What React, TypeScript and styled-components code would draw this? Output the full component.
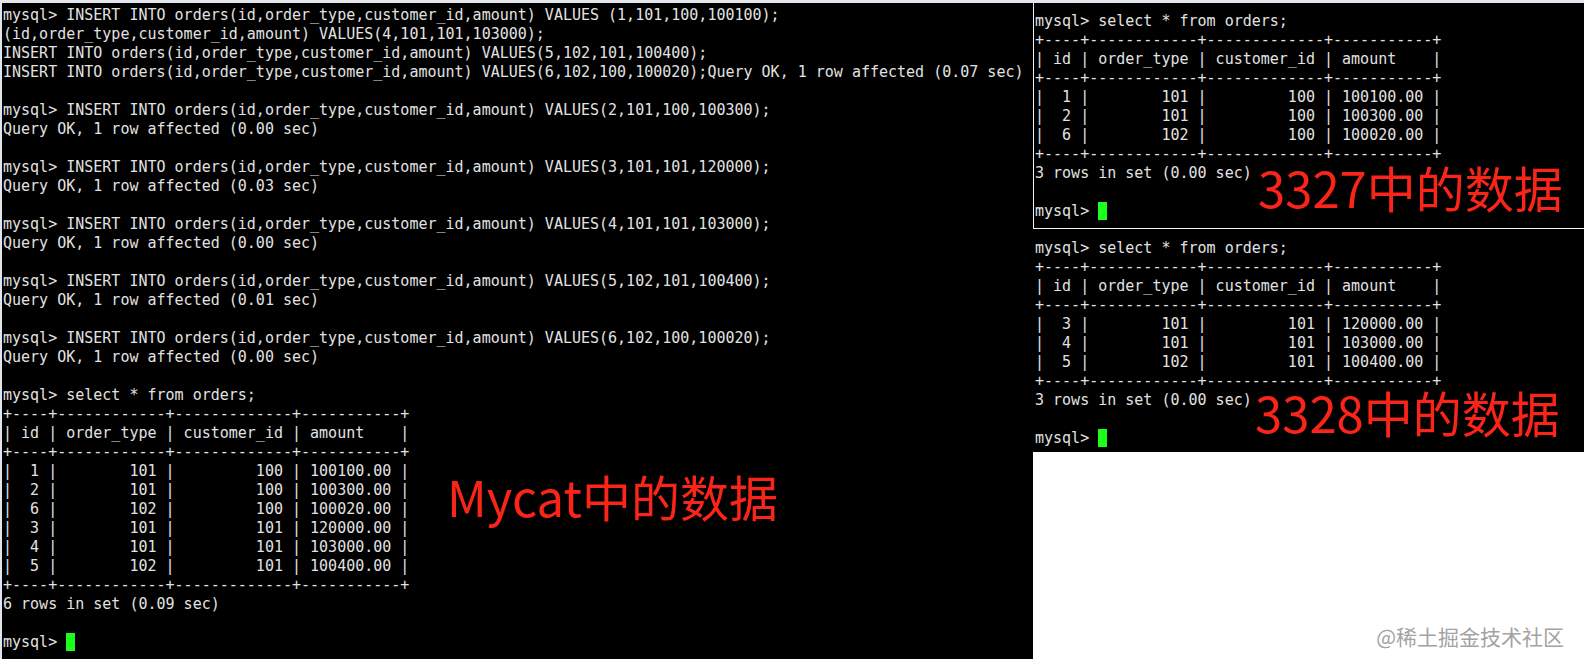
import React from "react";
import styled, { createGlobalStyle } from "styled-components";

const GlobalStyle = createGlobalStyle`
  html, body {
    margin: 0;
    padding: 0;
    background: #ffffff;
  }
  #root {
    width: 1584px;
    height: 666px;
  }
`;

const Page = styled.div`
  position: relative;
  width: 1584px;
  height: 666px;
  background: #ffffff;
  display: flex;
  flex-direction: column;
  overflow: hidden;
`;

const TopStrip = styled.div`
  height: 3px;
  background: #e4e6ee;
  flex: none;
`;

const Row = styled.div`
  display: flex;
  align-items: flex-start;
`;

const Terminal = styled.div<{ $w: number; $h: number; $pt: number; $pl: number }>`
  position: relative;
  box-sizing: border-box;
  width: ${(p) => p.$w}px;
  height: ${(p) => p.$h}px;
  padding: ${(p) => p.$pt}px 0 0 ${(p) => p.$pl}px;
  background: #000000;
  overflow: hidden;
  flex: none;
`;

const LeftTerminal = styled(Terminal)`
  border-left: 2px solid #e2e4ec;
`;

const FramedTerminal = styled(Terminal)`
  border-left: 1px solid #f2f2f2;
  border-bottom: 1px solid #f2f2f2;
`;

const RightColumn = styled.div`
  display: flex;
  flex-direction: column;
  width: 551px;
  flex: none;
`;

const Screen = styled.pre`
  margin: 0;
  font-family: "DejaVu Sans Mono", "Liberation Mono", monospace;
  font-size: 15px;
  line-height: 19px;
  color: #e2e2e2;
  white-space: pre;
`;

const Cursor = styled.span`
  display: inline-block;
  width: 9px;
  height: 18px;
  background: #1cff1c;
  vertical-align: -4px;
`;

const Label = styled.div<{ $top: number; $left: number }>`
  position: absolute;
  top: ${(p) => p.$top}px;
  left: ${(p) => p.$left}px;
  font-family: "Noto Sans CJK SC", "Noto Sans", sans-serif;
  font-size: 49px;
  line-height: 1;
  color: #fa2419;
  white-space: nowrap;
`;

const Watermark = styled.div`
  position: absolute;
  right: 20px;
  top: 626px;
  font-family: "Noto Sans CJK SC", sans-serif;
  font-size: 21px;
  line-height: 1;
  color: #a3a3a3;
  white-space: nowrap;
`;

const ins = "INSERT INTO orders(id,order_type,customer_id,amount) ";
const border = "+----+------------+-------------+-----------+";
const header = "| id | order_type | customer_id | amount    |";

const row = (id: number, t: number, c: number, a: string) =>
  `|  ${id} |        ${t} |         ${c} | ${a} |`;

const leftLines = [
  `mysql> ${ins}VALUES (1,101,100,100100);`,
  "(id,order_type,customer_id,amount) VALUES(4,101,101,103000);",
  `${ins}VALUES(5,102,101,100400);`,
  `${ins}VALUES(6,102,100,100020);Query OK, 1 row affected (0.07 sec)`,
  "",
  `mysql> ${ins}VALUES(2,101,100,100300);`,
  "Query OK, 1 row affected (0.00 sec)",
  "",
  `mysql> ${ins}VALUES(3,101,101,120000);`,
  "Query OK, 1 row affected (0.03 sec)",
  "",
  `mysql> ${ins}VALUES(4,101,101,103000);`,
  "Query OK, 1 row affected (0.00 sec)",
  "",
  `mysql> ${ins}VALUES(5,102,101,100400);`,
  "Query OK, 1 row affected (0.01 sec)",
  "",
  `mysql> ${ins}VALUES(6,102,100,100020);`,
  "Query OK, 1 row affected (0.00 sec)",
  "",
  "mysql> select * from orders;",
  border,
  header,
  border,
  row(1, 101, 100, "100100.00"),
  row(2, 101, 100, "100300.00"),
  row(6, 102, 100, "100020.00"),
  row(3, 101, 101, "120000.00"),
  row(4, 101, 101, "103000.00"),
  row(5, 102, 101, "100400.00"),
  border,
  "6 rows in set (0.09 sec)",
  "",
];

const shard1 = [
  "mysql> select * from orders;",
  border,
  header,
  border,
  row(1, 101, 100, "100100.00"),
  row(2, 101, 100, "100300.00"),
  row(6, 102, 100, "100020.00"),
  border,
  "3 rows in set (0.00 sec)",
  "",
];

const shard2 = [
  "mysql> select * from orders;",
  border,
  header,
  border,
  row(3, 101, 101, "120000.00"),
  row(4, 101, 101, "103000.00"),
  row(5, 102, 101, "100400.00"),
  border,
  "3 rows in set (0.00 sec)",
  "",
];

const Console: React.FC<{ lines: string[] }> = ({ lines }) => (
  <Screen>
    {lines.join("\n") + "\n"}
    {"mysql> "}
    <Cursor />
  </Screen>
);

export default function App() {
  return (
    <>
      <GlobalStyle />
      <Page>
        <TopStrip />
        <Row>
          <LeftTerminal $w={1033} $h={656} $pt={3} $pl={1}>
            <Console lines={leftLines} />
            <Label $top={468} $left={445}>
              Mycat中的数据
            </Label>
          </LeftTerminal>
          <RightColumn>
            <FramedTerminal $w={551} $h={226} $pt={9} $pl={1}>
              <Console lines={shard1} />
              <Label $top={159} $left={224}>
                3327中的数据
              </Label>
            </FramedTerminal>
            <Terminal $w={551} $h={223} $pt={10} $pl={2}>
              <Console lines={shard2} />
              <Label $top={158} $left={222}>
                3328中的数据
              </Label>
            </Terminal>
          </RightColumn>
        </Row>
        <Watermark>@稀土掘金技术社区</Watermark>
      </Page>
    </>
  );
}
